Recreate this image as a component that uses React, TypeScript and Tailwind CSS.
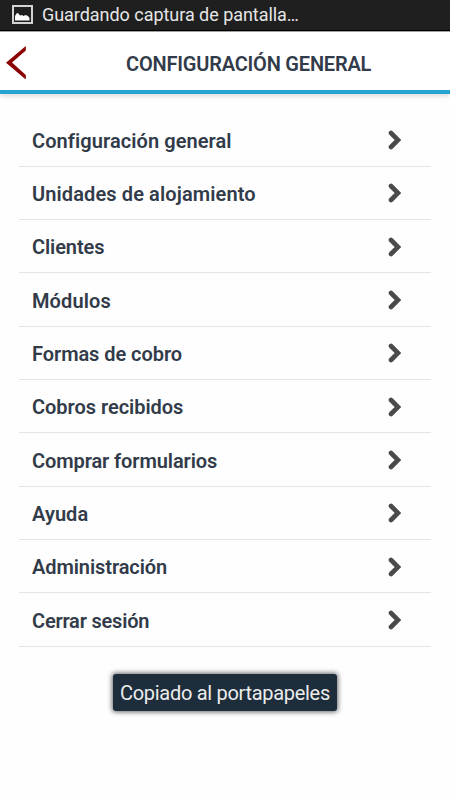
import React from 'react';

const menuItems = [
  { label: 'Configuración general', tracking: 'tracking-[0.08px]' },
  { label: 'Unidades de alojamiento', tracking: 'tracking-[0.11px]' },
  { label: 'Clientes', tracking: 'tracking-[-0.1px]' },
  { label: 'Módulos', tracking: 'tracking-[0.12px]' },
  { label: 'Formas de cobro', tracking: 'tracking-[-0.06px]' },
  { label: 'Cobros recibidos', tracking: 'tracking-[-0.03px]' },
  { label: 'Comprar formularios', tracking: 'tracking-[-0.09px]' },
  { label: 'Ayuda', tracking: 'tracking-[0.05px]' },
  { label: 'Administración', tracking: 'tracking-[-0.08px]' },
  { label: 'Cerrar sesión', tracking: 'tracking-[-0.2px]' },
];

const StatusBar: React.FC = () => (
  <div className="flex h-[31px] items-center border-b border-black bg-[#1f1f1f] pl-3">
    <svg width="21" height="19" viewBox="0 0 21 19" className="mb-[2px] shrink-0">
      <rect x="1" y="1" width="19" height="17" fill="#1f1f1f" stroke="#d4d4d4" strokeWidth="2" />
      <path d="M3 15.500V11l1.500-2.500L6 8l2 2.500 2-.5 1.500 1L13.500 10l2.500 1 1.500 2v2.500z" fill="#fff" />
    </svg>
    <span className="ml-[9px] whitespace-nowrap text-[18px] leading-[30px] tracking-[-0.04px] text-[#e6e6e6]">Guardando captura de pantalla…</span>
  </div>
);

const Header: React.FC = () => (
  <header className="flex h-[63px] items-center border-t border-b-4 border-t-[#a0a0a0] border-b-[#25a4d0] bg-white shadow-[0_2px_5px_rgba(0,0,0,0.15)]">
    <button type="button" aria-label="Volver" className="ml-[6px] mt-[4px] shrink-0">
      <svg width="21" height="34" viewBox="0 0 21 34">
        <path d="M19.800 0v4.500L6 16.500l13.800 12.500v4.500L0 16.800z" fill="#8b0000" />
      </svg>
    </button>
    <h1 className="ml-[99px] mt-[6px] whitespace-nowrap text-[20px] font-semibold leading-6 tracking-[-0.2px] text-[#323b49]">CONFIGURACIÓN GENERAL</h1>
  </header>
);

const App: React.FC = () => {
  return (
    <div className="flex h-[800px] w-[450px] flex-col overflow-hidden bg-[#fefefe] font-['Roboto',sans-serif]">
      <StatusBar />
      <Header />
      <ul className="mt-[19.300px] ml-[19px] w-[412px]">
        {menuItems.map((item) => (
          <li key={item.label} className="flex h-[53.350px] items-center justify-between border-b border-[#e4e4e4] pl-[13px] pr-[29px]">
            <span className={`mt-[2.400px] whitespace-nowrap text-[20px] font-semibold leading-6 text-[#323b49] ${item.tracking}`}>{item.label}</span>
            <svg width="14" height="20" viewBox="0 0 14 20" className="mt-px shrink-0">
              <path d="M3 3l7 7-7 7" fill="none" stroke="#4a4a4a" strokeWidth="4.600" strokeLinecap="round" />
            </svg>
          </li>
        ))}
      </ul>
      {/* Toast */}
      <div className="ml-[113px] mt-[27.200px] flex h-[37px] w-[224px] items-center justify-center rounded-[3px] bg-[#1e2d3b] shadow-[0_0_5px_1px_rgba(0,0,0,0.6)]">
        <span className="mt-px whitespace-nowrap text-[20px] leading-6 tracking-[-0.3px] text-[#ececec]">Copiado al portapapeles</span>
      </div>
    </div>
  );
};

export default App;
